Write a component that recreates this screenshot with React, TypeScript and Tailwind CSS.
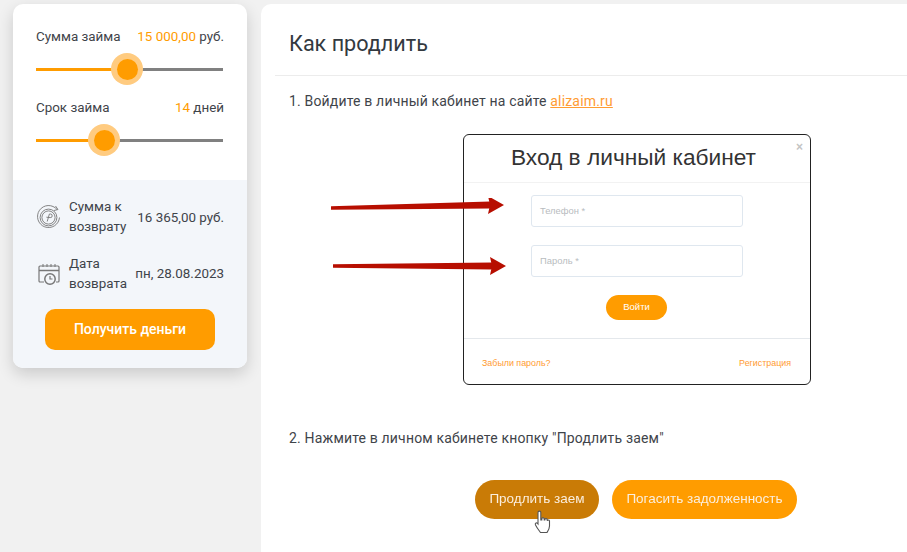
import React from "react";

function Slider({ pct, fill }: { pct: number; fill: number }) {
  return (
    <div className="relative h-[3px] w-[187px] bg-[#808080]">
      <div className="h-full bg-[#ff9c00]" style={{ width: fill }} />
      <div
        className="absolute top-[-15px] flex h-[32px] w-[32px] items-center justify-center rounded-full bg-[#ffcb80]"
        style={{ left: pct }}
      >
        <div className="h-[21px] w-[21px] rounded-full bg-[#ff9c00]" />
      </div>
    </div>
  );
}

function CoinIcon() {
  return (
    <svg width="26" height="26" viewBox="0 0 26 26" fill="none" stroke="#777" strokeWidth="0.9" className="shrink-0">
      <path d="M21 5.5 A11 11 0 1 0 23.5 13.5" />
      <circle cx="12.5" cy="13.5" r="8.4" />
      <circle cx="12.5" cy="13.5" r="6.6" />
      <path d="M11.2 17.5 L13.4 10 h1.2 a1.8 1.8 0 0 1 -0.4 3.6 l-3.8 -0.4" />
      <path d="M19.5 2 l2.5 3.5 -4 1" />
    </svg>
  );
}

function CalendarIcon() {
  return (
    <svg width="22" height="22" viewBox="0 0 22 22" fill="none" stroke="#777" strokeWidth="1.2" className="shrink-0">
      <path d="M6 19 H2 a1 1 0 0 1 -1 -1 V4 a1 1 0 0 1 1 -1 H20 a1 1 0 0 1 1 1 V18 a1 1 0 0 1 -1 1 H18" />
      <path d="M1 7.5 H21" strokeWidth="1.6" />
      <path d="M5 1 V4 M9 1 V4 M13 1 V4 M17 1 V4" strokeWidth="1" />
      <circle cx="12" cy="16" r="5.2" fill="#f3f6fa" strokeWidth="1.5" />
      <path d="M12 13 V16 H14.5" />
    </svg>
  );
}

function Arrow({ className, y1, y2 }: { className: string; y1: number; y2: number }) {
  return (
    <svg width="176" height="20" viewBox="0 0 176 20" className={className}>
      <polygon points={`1,${y1 - 1.7} 160,${y2 - 3.5} 160,${y2 + 3.5} 1,${y1 + 1.7}`} fill="#b70e00" />
      <polygon points={`158,${y2 - 9} 174,${y2} 158,${y2 + 9} 160,${y2}`} fill="#b70e00" />
    </svg>
  );
}

function Field({ label }: { label: string }) {
  return (
    <div className="flex h-[32px] w-[212px] items-center rounded-[3px] border border-[#dfe7ef] bg-white pl-[8px] pt-[1px] text-[9.4px] text-[#b8bcc0]">
      {label}
    </div>
  );
}

export default function App() {
  return (
    <div className="flex h-[552px] w-[907px] overflow-hidden bg-[#f1f1f1] pt-[4px] font-['Roboto',sans-serif] text-[14px] text-[#3f444a]">
      <aside className="ml-[13px] h-[364px] w-[234px] shrink-0 overflow-hidden rounded-[10px] bg-white text-[13.4px] shadow-[0_6px_16px_rgba(0,0,0,0.16)]">
        <div className="h-[176px] px-[23px] pt-[24px]">
          <div className="flex justify-between leading-[18px]">
            <span>Сумма займа</span>
            <span>
              <span className="text-[#ff9c00]">15 000,00</span> руб.
            </span>
          </div>
          <div className="mt-[22px]">
            <Slider pct={75} fill={80} />
          </div>
          <div className="mt-[28px] flex justify-between leading-[18px]">
            <span>Срок займа</span>
            <span>
              <span className="text-[#ff9c00]">14</span> дней
            </span>
          </div>
          <div className="mt-[22px]">
            <Slider pct={52} fill={60} />
          </div>
        </div>
        <div className="h-[188px] bg-[#f3f6fa] px-[23px] pt-[17px]">
          <div className="flex items-center justify-between leading-[20px]">
            <div className="flex items-center gap-[7px]">
              <CoinIcon />
              <span className="w-[62px]">Сумма к возврату</span>
            </div>
            <span className="pt-[2px]">16 365,00 руб.</span>
          </div>
          <div className="mt-[17px] flex items-center justify-between leading-[20px]">
            <div className="flex items-center gap-[9px] pl-[2px]">
              <CalendarIcon />
              <span className="w-[60px]">Дата возврата</span>
            </div>
            <span>пн, 28.08.2023</span>
          </div>
          <div className="mt-[15px] flex justify-center">
            <div className="flex h-[41px] w-[170px] items-center justify-center rounded-[10px] bg-[#ff9c00] text-[14px] font-medium text-white">
              Получить деньги
            </div>
          </div>
        </div>
      </aside>

      <main className="ml-[14px] flex-1 rounded-tl-[10px] bg-white pl-[14px] tracking-[0.17px]">
        <h1 className="flex h-[72px] items-center border-b border-[#ececec] pl-[14px] pt-[9px] text-[21.6px] font-normal tracking-normal text-[#33393f]">
          Как продлить
        </h1>
        <p className="mt-[16px] pl-[14px] leading-[18px]">
          1. Войдите в личный кабинет на сайте{" "}
          <span className="text-[#ff9c33] underline">alizaim.ru</span>
        </p>

        <div className="relative ml-[188px] mt-[24px] h-[251px] w-[348px] rounded-[6px] border border-[#222] bg-white font-['Liberation_Sans',sans-serif] tracking-normal blur-[0.3px]">
          <div className="relative flex h-[48px] items-center justify-center border-b border-[#f2f2f2] pr-[7px] pb-[2px] text-[22.7px] text-[#333]">
            Вход в личный кабинет
            <span className="absolute right-[7px] top-[3px] text-[12px] font-bold text-[#c4c4c4]">×</span>
          </div>
          <div className="flex flex-col items-center gap-[18px] pt-[12px]">
            <Field label="Телефон *" />
            <Field label="Пароль *" />
          </div>
          <div className="mt-[18px] flex justify-center pr-[1px]">
            <div className="flex h-[25px] w-[61px] items-center justify-center rounded-full bg-[#ff9c00] text-[9.5px] text-white">
              Войти
            </div>
          </div>
          <div className="mt-[18px] flex h-[45px] items-center justify-between border-t border-[#e4e8ec] pl-[18px] pr-[19px] pt-[5px] text-[8.9px] text-[#ff9c33]">
            <span>Забыли пароль?</span>
            <span>Регистрация</span>
          </div>
          <Arrow className="absolute left-[-134px] top-[63px]" y1={10} y2={7} />
          <Arrow className="absolute left-[-132px] top-[121px]" y1={10} y2={10} />
        </div>

        <p className="mt-[44px] pl-[14px] leading-[18px]">
          2. Нажмите в личном кабинете кнопку "Продлить заем"
        </p>

        <div className="relative ml-[200px] mt-[33px] flex gap-[13px] font-['Liberation_Sans',sans-serif] text-[13.5px] tracking-normal text-[#fbeedd]">
          <div className="flex h-[39px] w-[124px] items-center justify-center rounded-full bg-[#c97b06] blur-[0.3px]">Продлить заем</div>
          <div className="flex h-[39px] w-[185px] items-center justify-center rounded-full bg-[#ff9c00] blur-[0.3px]">Погасить задолженность</div>
          <svg width="18" height="24" viewBox="0 0 18 24" className="absolute left-[59px] top-[30px]" fill="#fff" stroke="#555" strokeWidth="1.1">
            <path d="M4 2.5 a1.4 1.4 0 0 1 2.8 0 V10 l1 0 V8.6 a1.3 1.3 0 0 1 2.4 0 V10 l0.6 0 V9.4 a1.3 1.3 0 0 1 2.4 0 V10.8 a1.2 1.2 0 0 1 2.3 0 V16 c0 3 -1.5 5 -2.5 6.5 H6.5 C5 20.5 3 18 1.5 15 c-0.8 -1.6 0.8 -2.8 2 -1.6 L4 14 Z" />
          </svg>
        </div>
      </main>
    </div>
  );
}
